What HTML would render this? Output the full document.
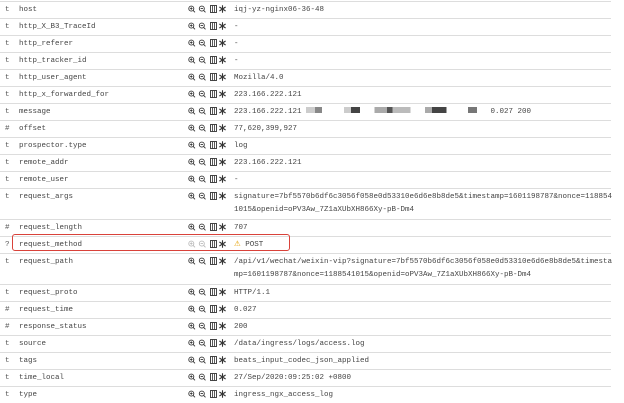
<!DOCTYPE html>
<html><head><meta charset="utf-8"><style>
*{margin:0;padding:0;box-sizing:border-box}
body{width:624px;height:400px;background:#fff;overflow:hidden;font-family:"Liberation Mono",monospace;font-size:7.5px;line-height:13px;color:#444;position:relative}
.r{position:absolute;left:0;width:611px;border-top:1px solid #ddd}
.t{position:absolute;left:5px;top:2px;color:#555}
.n{position:absolute;left:19px;top:2px}
.ic{position:absolute;left:188px;top:3px;width:46px;height:10px;overflow:visible}
.v{position:absolute;left:234px;top:2px;width:382px;word-break:break-all}
.box{position:absolute;left:12px;top:234px;width:278px;height:17px;border:1.5px solid #d9423a;border-radius:3px}
</style></head><body>
<svg width="0" height="0" style="position:absolute"><defs>
<g id="zi" fill="none" stroke-width="0.9"><circle cx="3.3" cy="3.6" r="2.5"/><path d="M5.1 5.4 L7 7.3 M2.1 3.6 H4.5 M3.3 2.4 V4.8"/></g>
<g id="zo" fill="none" stroke-width="0.9"><circle cx="13.8" cy="3.6" r="2.5"/><path d="M15.6 5.4 L17.5 7.3 M12.6 3.6 H15"/></g>
<g id="rest" fill="none" stroke="#333"><rect x="22.5" y="0.5" width="6" height="7" stroke-width="0.9"/><path d="M24.5 0.5 V7.5 M26.5 0.5 V7.5" stroke-width="0.8"/>
<path d="M34.5 0.3 V7.7 M31.4 2 L37.6 6 M37.6 2 L31.4 6" stroke-width="1.1"/></g>
<g id="icons" stroke="#333"><use href="#zi"/><use href="#zo"/><use href="#rest"/></g>
<g id="icons2" stroke="#bbb"><use href="#zi"/><use href="#zo"/><use href="#rest"/></g>
</defs></svg>

<div class="r" style="top:1px;height:17px"><span class="t">t</span><span class="n">host</span><svg class="ic"><use href="#icons"/></svg><span class="v">iqj-yz-nginx06-36-48</span></div>
<div class="r" style="top:18px;height:17px"><span class="t">t</span><span class="n">http_X_B3_TraceId</span><svg class="ic"><use href="#icons"/></svg><span class="v">-</span></div>
<div class="r" style="top:35px;height:17px"><span class="t">t</span><span class="n">http_referer</span><svg class="ic"><use href="#icons"/></svg><span class="v">-</span></div>
<div class="r" style="top:52px;height:17px"><span class="t">t</span><span class="n">http_tracker_id</span><svg class="ic"><use href="#icons"/></svg><span class="v">-</span></div>
<div class="r" style="top:69px;height:17px"><span class="t">t</span><span class="n">http_user_agent</span><svg class="ic"><use href="#icons"/></svg><span class="v">Mozilla/4.0</span></div>
<div class="r" style="top:86px;height:17px"><span class="t">t</span><span class="n">http_x_forwarded_for</span><svg class="ic"><use href="#icons"/></svg><span class="v">223.166.222.121</span></div>
<div class="r" style="top:103px;height:17px"><span class="t">t</span><span class="n">message</span><svg class="ic"><use href="#icons"/></svg><span class="v">223.166.222.121 <span style="display:inline-block;width:180px;height:6px;background:linear-gradient(90deg,#ccc 0 5%,#888 5% 9%,#fff 9% 21%,#ccc 21% 25%,#444 25% 30%,#fff 30% 38%,#aaa 38% 45%,#555 45% 48%,#bbb 48% 58%,#fff 58% 66%,#aaa 66% 70%,#444 70% 78%,#fff 78% 90%,#777 90% 95%,#fff 95%)"></span> 0.027 200</span></div>
<div class="r" style="top:120px;height:17px"><span class="t">#</span><span class="n">offset</span><svg class="ic"><use href="#icons"/></svg><span class="v">77,620,399,927</span></div>
<div class="r" style="top:137px;height:17px"><span class="t">t</span><span class="n">prospector.type</span><svg class="ic"><use href="#icons"/></svg><span class="v">log</span></div>
<div class="r" style="top:154px;height:17px"><span class="t">t</span><span class="n">remote_addr</span><svg class="ic"><use href="#icons"/></svg><span class="v">223.166.222.121</span></div>
<div class="r" style="top:171px;height:17px"><span class="t">t</span><span class="n">remote_user</span><svg class="ic"><use href="#icons"/></svg><span class="v">-</span></div>
<div class="r" style="top:188px;height:31px"><span class="t">t</span><span class="n">request_args</span><svg class="ic"><use href="#icons"/></svg><span class="v">signature=7bf5570b6df6c3056f058e0d53310e6d6e8b8de5&amp;timestamp=1601198787&amp;nonce=1188541015&amp;openid=oPV3Aw_7Z1aXUbXH866Xy-pB-Dm4</span></div>
<div class="r" style="top:219px;height:17px"><span class="t">#</span><span class="n">request_length</span><svg class="ic"><use href="#icons"/></svg><span class="v">707</span></div>
<div class="r" style="top:236px;height:17px"><span class="t">?</span><span class="n">request_method</span><svg class="ic"><use href="#icons2"/></svg><span class="v"><span style="color:#e5a000">&#9888;</span> POST</span></div>
<div class="r" style="top:253px;height:31px"><span class="t">t</span><span class="n">request_path</span><svg class="ic"><use href="#icons"/></svg><span class="v">/api/v1/wechat/weixin-vip?signature=7bf5570b6df6c3056f058e0d53310e6d6e8b8de5&amp;timestamp=1601198787&amp;nonce=1188541015&amp;openid=oPV3Aw_7Z1aXUbXH866Xy-pB-Dm4</span></div>
<div class="r" style="top:284px;height:17px"><span class="t">t</span><span class="n">request_proto</span><svg class="ic"><use href="#icons"/></svg><span class="v">HTTP/1.1</span></div>
<div class="r" style="top:301px;height:17px"><span class="t">#</span><span class="n">request_time</span><svg class="ic"><use href="#icons"/></svg><span class="v">0.027</span></div>
<div class="r" style="top:318px;height:17px"><span class="t">#</span><span class="n">response_status</span><svg class="ic"><use href="#icons"/></svg><span class="v">200</span></div>
<div class="r" style="top:335px;height:17px"><span class="t">t</span><span class="n">source</span><svg class="ic"><use href="#icons"/></svg><span class="v">/data/ingress/logs/access.log</span></div>
<div class="r" style="top:352px;height:17px"><span class="t">t</span><span class="n">tags</span><svg class="ic"><use href="#icons"/></svg><span class="v">beats_input_codec_json_applied</span></div>
<div class="r" style="top:369px;height:17px"><span class="t">t</span><span class="n">time_local</span><svg class="ic"><use href="#icons"/></svg><span class="v">27/Sep/2020:09:25:02 +0800</span></div>
<div class="r" style="top:386px;height:17px"><span class="t">t</span><span class="n">type</span><svg class="ic"><use href="#icons"/></svg><span class="v">ingress_ngx_access_log</span></div>
<div class="box"></div>
</body></html>
